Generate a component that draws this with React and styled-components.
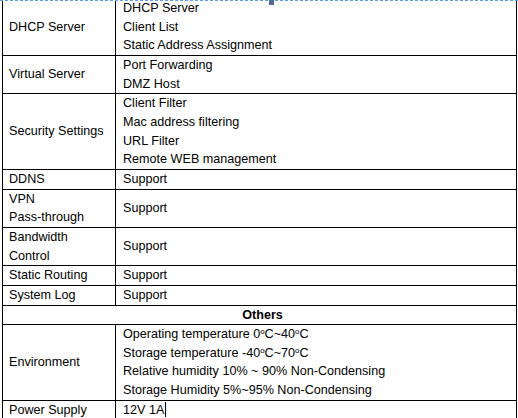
import React from 'react';
import styled, { createGlobalStyle } from 'styled-components';

const Global = createGlobalStyle`
  html, body { margin: 0; padding: 0; background: #fff; }
  body { font-family: "Liberation Sans", Arial, sans-serif; }
`;

const Page = styled.div`
  position: relative;
  width: 518px;
  height: 418px;
  overflow: hidden;
  padding-left: 2px;
  box-sizing: border-box;
  background: #fff;
`;

const Table = styled.table`
  border-collapse: separate;
  border-spacing: 0;
  table-layout: fixed;
  width: 515px;
  margin-top: -2px;
  border-left: 1px solid #000;
  border-top: 1px solid #000;
  font-size: 12.6px;
  line-height: 18.67px;
  color: #000;
`;

const Cell = styled.td`
  border-right: 1px solid #000;
  border-bottom: 1px solid #000;
  padding: 0 0 0 ${p => (p.$wide ? 7 : 6)}px;
  vertical-align: middle;
  text-align: ${p => (p.$center ? 'center' : 'left')};
  font-weight: ${p => (p.$bold ? 'bold' : 'normal')};
  white-space: nowrap;
`;

const Line = styled.div`
  height: 18.67px;
`;

const Deg = styled.span`
  font-size: 0.62em;
  vertical-align: 0.55em;
  line-height: 0;
`;

const Caret = styled.span`
  display: inline-block;
  width: 1px;
  height: 15px;
  background: #000;
  vertical-align: -3px;
  margin-left: 1px;
`;

const DashedEdge = styled.div`
  position: absolute;
  left: 0;
  top: 0;
  width: 518px;
  height: 1px;
  background: repeating-linear-gradient(to right, #5f9de8 0 3px, transparent 3px 5px);
`;

const Handle = styled.div`
  position: absolute;
  left: 269px;
  top: 0;
  width: 5px;
  height: 5px;
  background: #4a6d9c;
`;

const rows = [
  { label: 'DHCP Server', items: ['DHCP Server', 'Client List', 'Static Address Assignment'] },
  { label: 'Virtual Server', items: ['Port Forwarding', 'DMZ Host'] },
  { label: 'Security Settings', items: ['Client Filter', 'Mac address filtering', 'URL Filter', 'Remote WEB management'] },
  { label: 'DDNS', items: ['Support'] },
  { label: ['VPN', 'Pass-through'], items: ['Support'] },
  { label: ['Bandwidth', 'Control'], items: ['Support'] },
  { label: 'Static Routing', items: ['Support'] },
  { label: 'System Log', items: ['Support'] },
];

const renderLines = v =>
  Array.isArray(v) ? v.map((t, i) => <Line key={i}>{t}</Line>) : <Line>{v}</Line>;

export default function App() {
  return (
    <>
      <Global />
      <Page>
        <Table>
          <colgroup>
            <col style={{ width: 113 }} />
            <col style={{ width: 401 }} />
          </colgroup>
          <tbody>
            {rows.map((r, i) => (
              <tr key={i}>
                <Cell>{renderLines(r.label)}</Cell>
                <Cell $wide>{renderLines(r.items)}</Cell>
              </tr>
            ))}
            <tr>
              <Cell colSpan={2} $center $bold>
                <Line>Others</Line>
              </Cell>
            </tr>
            <tr>
              <Cell>Environment</Cell>
              <Cell $wide>
                <Line>Operating temperature 0<Deg>o</Deg>C~40<Deg>o</Deg>C</Line>
                <Line>Storage temperature -40<Deg>o</Deg>C~70<Deg>o</Deg>C</Line>
                <Line>Relative humidity 10% ~ 90% Non-Condensing</Line>
                <Line>Storage Humidity 5%~95% Non-Condensing</Line>
              </Cell>
            </tr>
            <tr>
              <Cell>Power Supply</Cell>
              <Cell $wide>
                <Line>12V 1A<Caret /></Line>
              </Cell>
            </tr>
          </tbody>
        </Table>
        <DashedEdge />
        <Handle />
      </Page>
    </>
  );
}
